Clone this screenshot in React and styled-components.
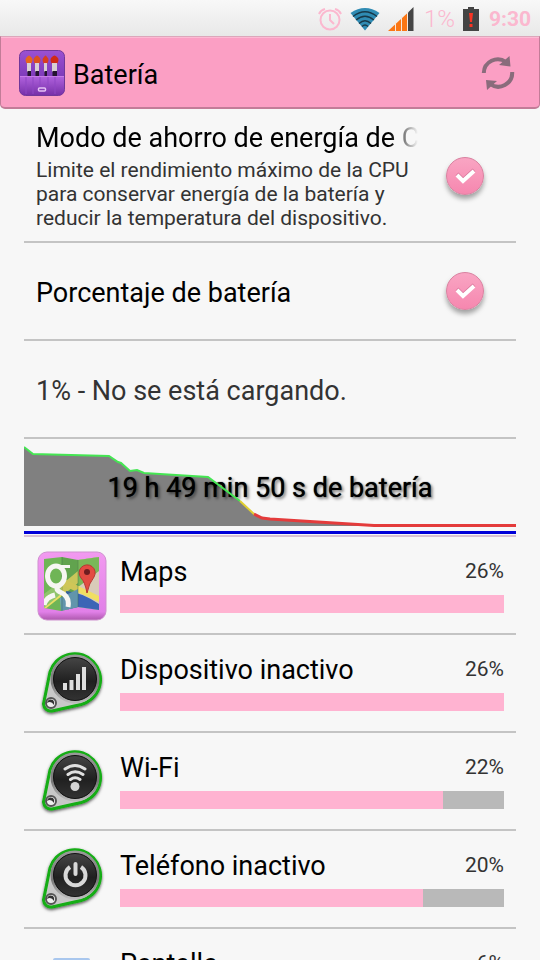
import React, { useState } from "react";
import styled, { createGlobalStyle } from "styled-components";

const GlobalStyle = createGlobalStyle`
  * { box-sizing: border-box; }
  body {
    margin: 0;
    background: #f7f7f7;
    color: #000;
    font-family: Roboto, "Noto Sans", sans-serif;
  }
`;

const Screen = styled.div`
  height: 100vh;
  overflow: hidden;
  display: flex;
  flex-direction: column;
`;

const StatusBar = styled.div`
  height: 36px;
  flex-shrink: 0;
  display: flex;
  align-items: center;
  justify-content: flex-end;
  padding: 2px 9px 0 0;
  background: linear-gradient(#f8f8f8, #e8e8e8);
  color: #fbb8cf;
  svg { display: block; }
`;

const StatusIcon = styled.span`
  margin-right: ${(p) => p.$gap}px;
`;

const StatusPercent = styled.span`
  font-size: 24px;
  font-weight: 300;
  line-height: 32px;
  margin-right: 8px;
`;

const Clock = styled.time`
  font-size: 21px;
  font-weight: 700;
  line-height: 32px;
`;

const ActionBar = styled.header`
  height: 73px;
  flex-shrink: 0;
  display: flex;
  align-items: center;
  gap: 8px;
  padding: 2px 24px 0 18px;
  background: #fb9fc4;
  border: solid #c27c98;
  border-width: 1px 1px 2px;
  border-top-color: #dca6bb;
  border-radius: 0 0 5px 5px;
  box-shadow: inset 0 1px #fdb9d3;
  svg { display: block; }
`;

const Title = styled.h1`
  flex: 1;
  margin: 0;
  padding-top: 4px;
  font-size: 27px;
  font-weight: 400;
  line-height: 32px;
`;

const IconButton = styled.button`
  padding: 0;
  border: 0;
  background: none;
  cursor: pointer;
`;

const Content = styled.main`
  flex: 1;
  min-height: 0;
  overflow: hidden;
  padding: 0 24px;
`;

const Row = styled.section`
  display: flex;
  align-items: center;
  min-height: 98px;
  padding: 0 12px;
  border-bottom: 2px solid #c4c4c4;
`;

const SettingRow = styled(Row)`
  gap: 28px;
  padding: ${(p) => (p.$tall ? "12px 32px 11px 12px" : "0 32px 0 12px")};
`;

const SettingText = styled.div`
  flex: 1;
  min-width: 0;
`;

const SettingTitle = styled.label`
  display: block;
  padding-top: ${(p) => (p.$fade ? 0 : 4)}px;
  font-size: 27px;
  line-height: 34px;
  white-space: nowrap;
  overflow: hidden;
  mask-image: ${(p) => (p.$fade ? "linear-gradient(to right, #000 calc(100% - 28px), transparent)" : "none")};
`;

const Summary = styled.p`
  margin: 0;
  padding-top: 3px;
  font-size: 21px;
  line-height: 24px;
  color: #333;
`;

const StatusText = styled.p`
  margin: 0;
  padding-top: 4px;
  font-size: 27px;
  line-height: 34px;
  color: #333;
`;

const CheckWrap = styled.span`
  display: grid;
  width: 38px;
  height: 38px;
  > * { grid-area: 1 / 1; }
  svg { pointer-events: none; }
`;

const CheckInput = styled.input`
  appearance: none;
  margin: 0;
  width: 38px;
  height: 38px;
  border: 1px solid #d9809f;
  border-radius: 50%;
  background: linear-gradient(#f9a5c3, #f687af);
  box-shadow: 0 4px 5px rgba(0, 0, 0, 0.35);
`;

const ChartPanel = styled.section`
  display: grid;
  align-items: center;
  height: 98px;
  border-bottom: 2px solid #d8c3d3;
  > * { grid-area: 1 / 1; }
  svg { display: block; width: 100%; height: 96px; }
`;

const ChartLabel = styled.h2`
  margin: 0;
  padding-top: 2px;
  text-align: center;
  font-size: 27px;
  font-weight: 400;
  line-height: 34px;
  text-shadow: 0 0 1px #000, 2px 2px 3px rgba(0, 0, 0, 0.5);
`;

const UsageRow = styled(Row)`
  gap: 12px;
  > svg { flex-shrink: 0; }
`;

const UsageBody = styled.div`
  flex: 1;
  min-width: 0;
  padding-bottom: 2px;
`;

const UsageHead = styled.div`
  display: flex;
  justify-content: space-between;
  margin-bottom: 6px;
`;

const UsageName = styled.span`
  font-size: 27px;
  line-height: 34px;
`;

const UsageValue = styled.span`
  font-size: 21px;
  line-height: 32px;
  color: #333;
`;

const Track = styled.div`
  height: 18px;
  background: #b9b9b9;
`;

const Fill = styled.div`
  height: 100%;
  background: #ffb3d1;
`;

const AlarmIcon = () => (
  <svg width="26" height="26" viewBox="0 0 26 26" fill="none" stroke="#fbb8cf" strokeWidth="2" aria-hidden="true">
    <circle cx="14" cy="14" r="9.5" />
    <path d="M14 8v6l4 4M3 8a9 9 0 0 1 6-5M25 8a9 9 0 0 0-6-5" />
  </svg>
);

const WifiStatusIcon = () => (
  <svg width="30" height="24" viewBox="0 0 30 24" aria-hidden="true">
    <path d="M.5 6Q15-4 29.500 6L15 23.500Z" fill="#2f8bb3" />
    <path d="M3 9.500Q15 0 27 9.500M6 13Q15 5.500 24 13M9 16.500Q15 11 21 16.500M12 19.500Q15 16.500 18 19.500" fill="none" stroke="#183848" strokeWidth="1.300" />
  </svg>
);

const SignalStatusIcon = () => (
  <svg width="26" height="24" viewBox="0 0 26 24" aria-hidden="true">
    <path d="M0 24L20 5.500V24Z" fill="#fb7614" />
    <path d="M20 5.500L25.500 0V24H20Z" fill="#454545" />
    <path d="M7.500 15v9M13.500 9v15M19.500 4v20" stroke="#f7e8dc" strokeWidth="1" />
  </svg>
);

const BatteryIcon = () => (
  <svg width="16" height="24" viewBox="0 0 16 24" aria-hidden="true">
    <path d="M5 0h6v2h5v22H0V2h5Z" fill="#444" />
    <path d="M6 6h4l-1 9H7ZM6.500 17h3v3h-3Z" fill="#fa3524" />
  </svg>
);

const brushes = [
  [10, "#e8641c", 4], [18, "#dc501f", 4], [26.500, "#d83d20", 3], [35.500, "#d02a16", 5],
];

const BrushCaseIcon = () => (
  <svg width="46" height="46" viewBox="0 0 46 46" aria-hidden="true">
    <defs>
      <linearGradient id="caseBack" x2="0" y2="1"><stop stopColor="#9a51d2" /><stop offset="1" stopColor="#6b2ba8" /></linearGradient>
      <linearGradient id="caseFront" x2="0" y2="1"><stop stopColor="#b263df" /><stop offset="1" stopColor="#7730a9" /></linearGradient>
    </defs>
    <rect x=".5" y=".5" width="45" height="45" rx="6" fill="url(#caseBack)" stroke="#70379a" />
    {brushes.map(([x, color, w]) => (
      <g key={x}>
        <path d={`M${x - w / 2} 14Q${x - w / 2 - 3} 9 ${x - w / 2} 7Q${x} 4 ${x + w / 2} 7Q${x + w / 2 + 3} 9 ${x + w / 2} 14Z`} fill={color} />
        <rect x={x - w / 2} y="13" width={w} height="9" fill="#d9d0d3" />
        <rect x={x - w / 2 + 0.500} y="21" width={w - 0.500} height="6" fill="#24142f" />
      </g>
    ))}
    <path d="M1 26H45V39Q45 45 39 45H7Q1 45 1 39Z" fill="url(#caseFront)" />
    <path d="M1 26.500H45" stroke="#c77ce8" />
    <path d="M7 27v17M14 27v17M21 27v10M29 27v10M36 27v17" stroke="#8f46c4" />
    <rect x="19.500" y="38" width="7" height="3" rx="1" fill="none" stroke="#e5c1f5" strokeWidth="1.500" />
  </svg>
);

const RefreshIcon = () => (
  <svg width="34" height="36" viewBox="0 0 34 36" fill="none" stroke="#8a6c7c" strokeWidth="4" aria-hidden="true">
    <path d="M2.800 18A14 14 0 0 1 25 7" />
    <path d="M31.200 17A14 14 0 0 1 9 29" />
    <path d="M28.500 1L29.500 11.500L18 10ZM5 25L16 26L6 35Z" fill="#8a6c7c" stroke="none" />
  </svg>
);

const MapsIcon = () => (
  <svg width="72" height="72" viewBox="0 0 72 72" aria-hidden="true">
    <defs>
      <linearGradient id="mapsFrame" x2="0" y2="1"><stop stopColor="#f29af0" /><stop offset=".88" stopColor="#e180e8" /><stop offset="1" stopColor="#ad58ad" /></linearGradient>
      <clipPath id="mapShape"><path d="M8 10L26 8L42 11L63 8V61L42 58L25 62L8 59Z" /></clipPath>
    </defs>
    <rect x="2" y="3" width="68" height="68" rx="9" fill="url(#mapsFrame)" stroke="#cf91cf" />
    <g clipPath="url(#mapShape)">
      <path d="M8 8H63V63H8Z" fill="#6fb556" />
      <path d="M41 8H63V63H41Z" fill="#d9cbb9" />
      <path d="M41 8H63V22L41 39Z" fill="#79b858" />
      <path d="M8 50L36 27L42 22V34L22 50L8 61Z" fill="#e9df64" />
      <path d="M26 29L63 47V53L26 36Z" fill="#f0df62" />
      <path d="M30 42Q45 43 63 55V63H32Z" fill="#3c65b6" />
      <path d="M8 45L25 32V45L8 59Z" fill="#8fc46b" />
      <path d="M24 49L42 40V59L25 62Z" fill="#6fa5c5" />
      <path d="M26 8L42 11V60L25 62Z" fill="#173e24" opacity=".15" />
      <path d="M26 8V62M42 10V59" stroke="#356c4a" strokeWidth="1" opacity=".4" />
      <g fill="none" stroke="#f6f6f2">
        <ellipse cx="20" cy="27" rx="8.500" ry="10" strokeWidth="5" />
        <path d="M20 17.500H34" strokeWidth="3" />
        <path d="M24 36Q18 40 24 43Q34 47 32 58M19 46Q10 48 8 56" strokeWidth="5" />
      </g>
    </g>
    <path d="M51 44Q49 33 45 29A8 8 0 1 1 58 28Q53 34 51 44Z" fill="#e34b42" stroke="#b73732" />
    <circle cx="51" cy="23" r="3" fill="#701c20" />
  </svg>
);

const glyphs = {
  signal: (
    <g fill="#dedede"><path d="M27 36h4v7h-4ZM33.500 33h4v10h-4ZM40 27h4v16h-4ZM46 20h4v23h-4Z" /></g>
  ),
  wifi: (
    <g fill="none" stroke="#e0e0e0" strokeWidth="3" strokeLinecap="round">
      <path d="M29 24Q39 17 49 24M32 29.500Q39 24 47 29.500M34.500 34.500Q39 31 44 34.500" />
      <circle cx="39" cy="41.500" r="4.500" fill="#d3d3d3" stroke="none" />
    </g>
  ),
  power: (
    <g fill="none" stroke="#d8d8d8" strokeWidth="4">
      <path d="M34 24A10 10 0 1 0 45 24" />
      <path d="M39.500 21V31" strokeLinecap="round" />
    </g>
  ),
};

const TagIcon = ({ glyph }) => (
  <svg width="72" height="72" viewBox="0 0 72 72" aria-hidden="true">
    <defs>
      <linearGradient id={`rim-${glyph}`} x2="0" y2="1"><stop stopColor="#999" /><stop offset=".6" stopColor="#777" /><stop offset="1" stopColor="#bbb" /></linearGradient>
      <linearGradient id={`face-${glyph}`} x2="0" y2="1"><stop stopColor="#484848" /><stop offset=".55" stopColor="#202020" /><stop offset="1" stopColor="#343434" /></linearGradient>
      <filter id={`shade-${glyph}`} x="-20%" y="-20%" width="140%" height="140%"><feDropShadow dx="0" dy="1.500" stdDeviation="1.500" floodOpacity=".65" /></filter>
    </defs>
    <path d="M7.500 57L14 25A25.800 25.800 0 1 1 45 57.500L16 64A7.500 7.500 0 0 1 7.500 57Z" fill="#c8c8c8" stroke="#12ad12" strokeWidth="3" filter={`url(#shade-${glyph})`} />
    <circle cx="39" cy="32" r="23" fill={`url(#face-${glyph})`} stroke={`url(#rim-${glyph})`} strokeWidth="3" />
    <circle cx="39" cy="32" r="21.500" fill="none" stroke="#111" />
    <circle cx="15" cy="56" r="5" fill="#f0f0f0" stroke="#555" strokeWidth="2" />
    <path d="M11 56Q12 51 17 53Q19 55 18 58Q15 53 11 56Z" fill="#333" />
    {glyphs[glyph]}
  </svg>
);

const DisplayIcon = () => (
  <svg width="72" height="72" viewBox="0 0 72 72" aria-hidden="true">
    <rect x="17" y="17" width="37" height="50" rx="2" fill="#a9c7ee" />
    <rect x="20" y="22" width="31" height="40" fill="#dceaff" />
  </svg>
);

const ChartArea = () => (
  <svg viewBox="0 0 492 96" preserveAspectRatio="none" aria-hidden="true">
    <path d="M0 8L9 15L85 17L94 23L97 24L106 32L113 31L120 34L184 38L216 62L231 76L238 79L246 80L350 87H0Z" fill="#808080" />
  </svg>
);

const ChartLine = () => (
  <svg viewBox="0 0 492 96" preserveAspectRatio="none" fill="none" aria-hidden="true">
    <path d="M0 8L9 15L85 17L94 23L97 24L106 32L113 31L120 34L184 38L216 62" stroke="#45e653" strokeWidth="2" />
    <path d="M216 62L231 76" stroke="#e0ce30" strokeWidth="2" />
    <path d="M230 75L238 79L246 80L350 86.500H492" stroke="#e43b3b" strokeWidth="3" />
    <path d="M0 93.500H492" stroke="#0000d8" strokeWidth="3" />
  </svg>
);

const CheckControl = ({ id }) => {
  const [on, setOn] = useState(true);
  return (
    <CheckWrap>
      <CheckInput id={id} type="checkbox" checked={on} onChange={(e) => setOn(e.target.checked)} />
      {on && (
        <svg width="38" height="38" viewBox="0 0 38 38" fill="none" aria-hidden="true">
          <path d="M11 17L17 23L28 13" stroke="#d8759a" strokeWidth="4" />
          <path d="M11 18L17 24L28 14" stroke="#fff" strokeWidth="4" />
        </svg>
      )}
    </CheckWrap>
  );
};

const usage = [
  { name: "Maps", value: "26%", fill: 100, icon: <MapsIcon /> },
  { name: "Dispositivo inactivo", value: "26%", fill: 100, icon: <TagIcon glyph="signal" /> },
  { name: "Wi-Fi", value: "22%", fill: 84, icon: <TagIcon glyph="wifi" /> },
  { name: "Teléfono inactivo", value: "20%", fill: 79, icon: <TagIcon glyph="power" /> },
  { name: "Pantalla", value: "6%", fill: 23, icon: <DisplayIcon /> },
];

export default function App() {
  return (
    <Screen>
      <GlobalStyle />
      <StatusBar>
        <StatusIcon $gap={8}><AlarmIcon /></StatusIcon>
        <StatusIcon $gap={8}><WifiStatusIcon /></StatusIcon>
        <StatusIcon $gap={10}><SignalStatusIcon /></StatusIcon>
        <StatusPercent>1%</StatusPercent>
        <StatusIcon $gap={10}><BatteryIcon /></StatusIcon>
        <Clock>9:30</Clock>
      </StatusBar>
      <ActionBar>
        <BrushCaseIcon />
        <Title>Batería</Title>
        <IconButton type="button" aria-label="Actualizar"><RefreshIcon /></IconButton>
      </ActionBar>
      <Content>
        <SettingRow $tall>
          <SettingText>
            <SettingTitle htmlFor="cpu-saving" $fade>Modo de ahorro de energía de CPU</SettingTitle>
            <Summary>Limite el rendimiento máximo de la CPU para conservar energía de la batería y reducir la temperatura del dispositivo.</Summary>
          </SettingText>
          <CheckControl id="cpu-saving" />
        </SettingRow>
        <SettingRow>
          <SettingText><SettingTitle htmlFor="battery-percent">Porcentaje de batería</SettingTitle></SettingText>
          <CheckControl id="battery-percent" />
        </SettingRow>
        <Row><StatusText>1% - No se está cargando.</StatusText></Row>
        <ChartPanel>
          <ChartArea />
          <ChartLabel>19 h 49 min 50 s de batería</ChartLabel>
          <ChartLine />
        </ChartPanel>
        {usage.map((item) => (
          <UsageRow key={item.name}>
            {item.icon}
            <UsageBody>
              <UsageHead>
                <UsageName>{item.name}</UsageName>
                <UsageValue>{item.value}</UsageValue>
              </UsageHead>
              <Track><Fill style={{ width: `${item.fill}%` }} /></Track>
            </UsageBody>
          </UsageRow>
        ))}
      </Content>
    </Screen>
  );
}
